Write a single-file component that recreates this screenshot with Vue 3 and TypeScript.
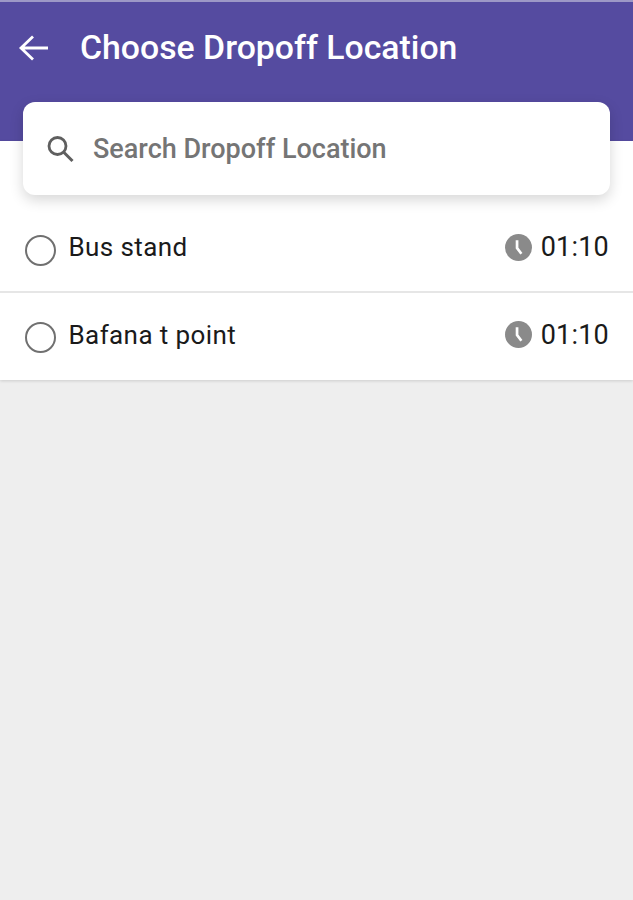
<template>
  <div class="screen">
    <header class="topbar">
      <button type="button" class="back" aria-label="Back">
        <svg viewBox="0 0 32 32" width="32" height="32">
          <path d="M30 16H3M15 4.500L3 16l12 11.500" stroke="currentColor" stroke-width="2.800" fill="none" />
        </svg>
      </button>
      <h1 class="title">Choose Dropoff Location</h1>
    </header>

    <section class="panel">
      <div class="search">
        <svg viewBox="0 0 30 30" width="30" height="30" class="search-icon">
          <circle cx="11.500" cy="12" r="8.500" stroke="currentColor" stroke-width="2.800" fill="none" />
          <path d="M17.500 18l9 9" stroke="currentColor" stroke-width="3" fill="none" />
        </svg>
        <span class="search-text">Search Dropoff Location</span>
      </div>

      <ul class="list">
        <li v-for="stop in stops" :key="stop.name" class="row">
          <span class="radio"></span>
          <span class="name">{{ stop.name }}</span>
          <svg viewBox="0 0 28 28" width="27" height="27" class="clock">
            <circle cx="14" cy="14" r="14" fill="currentColor" />
            <path d="M12.500 6.500v8l4.500 6" stroke="#fff" stroke-width="2.800" fill="none" />
          </svg>
          <span class="time">{{ stop.time }}</span>
        </li>
      </ul>
    </section>
  </div>
</template>

<script setup lang="ts">
interface Stop {
  name: string
  time: string
}

const stops: Stop[] = [
  { name: 'Bus stand', time: '01:10' },
  { name: 'Bafana t point', time: '01:10' },
]
</script>

<style scoped>
.screen {
  height: 900px;
  overflow: hidden;
  background: #eeeeee;
  font-family: Roboto, "Liberation Sans", sans-serif;
}

.topbar {
  display: flex;
  align-items: flex-start;
  height: 141px;
  padding: 30px 0 0 18px;
  box-sizing: border-box;
  background: #554ba0;
  border-top: 2px solid #9d98c6;
  color: #fff;
}

.back {
  display: block;
  width: 32px;
  height: 32px;
  padding: 0;
  border: 0;
  background: none;
  color: inherit;
}

.title {
  margin: -3px 0 0 30px;
  font-size: 33.800px;
  line-height: 38px;
  font-weight: 500;
  white-space: nowrap;
}

.panel {
  display: flow-root;
  background: #fff;
  box-shadow: 0 1px 3px rgba(0, 0, 0, 0.14);
}

.search {
  position: relative;
  z-index: 1;
  display: flex;
  align-items: center;
  height: 93px;
  margin: -39px 23px 0;
  padding: 0 0 0 23px;
  box-sizing: border-box;
  background: #fff;
  border-radius: 12px;
  box-shadow: 0 5px 14px rgba(0, 0, 0, 0.16);
}

.search-icon {
  color: #5f5f5f;
  flex-shrink: 0;
}

.search-text {
  margin-left: 17px;
  font-size: 27px;
  font-weight: 500;
  color: #757575;
  white-space: nowrap;
}

.list {
  margin: 0;
  padding: 0;
  list-style: none;
}

.row {
  display: flex;
  align-items: center;
  height: 87px;
  padding: 0 24px 4px 25px;
  box-sizing: border-box;
}

.row:first-child {
  height: 98px;
  padding: 8px 24px 0 25px;
  border-bottom: 2px solid #e6e6e6;
}

.radio {
  width: 31px;
  height: 31px;
  margin-top: 6px;
  box-sizing: border-box;
  border: 2.500px solid #707070;
  border-radius: 50%;
  flex-shrink: 0;
}

.name {
  margin-left: 12.500px;
  flex: 1;
  font-size: 26px;
  color: #1a1a1a;
  letter-spacing: 0.400px;
}

.clock {
  color: #8a8a8a;
  flex-shrink: 0;
}

.time {
  margin-left: 9px;
  font-size: 27px;
  color: #1a1a1a;
  letter-spacing: 0.200px;
}
</style>

<style>
html,
body {
  margin: 0;
  background: #eeeeee;
}
</style>
